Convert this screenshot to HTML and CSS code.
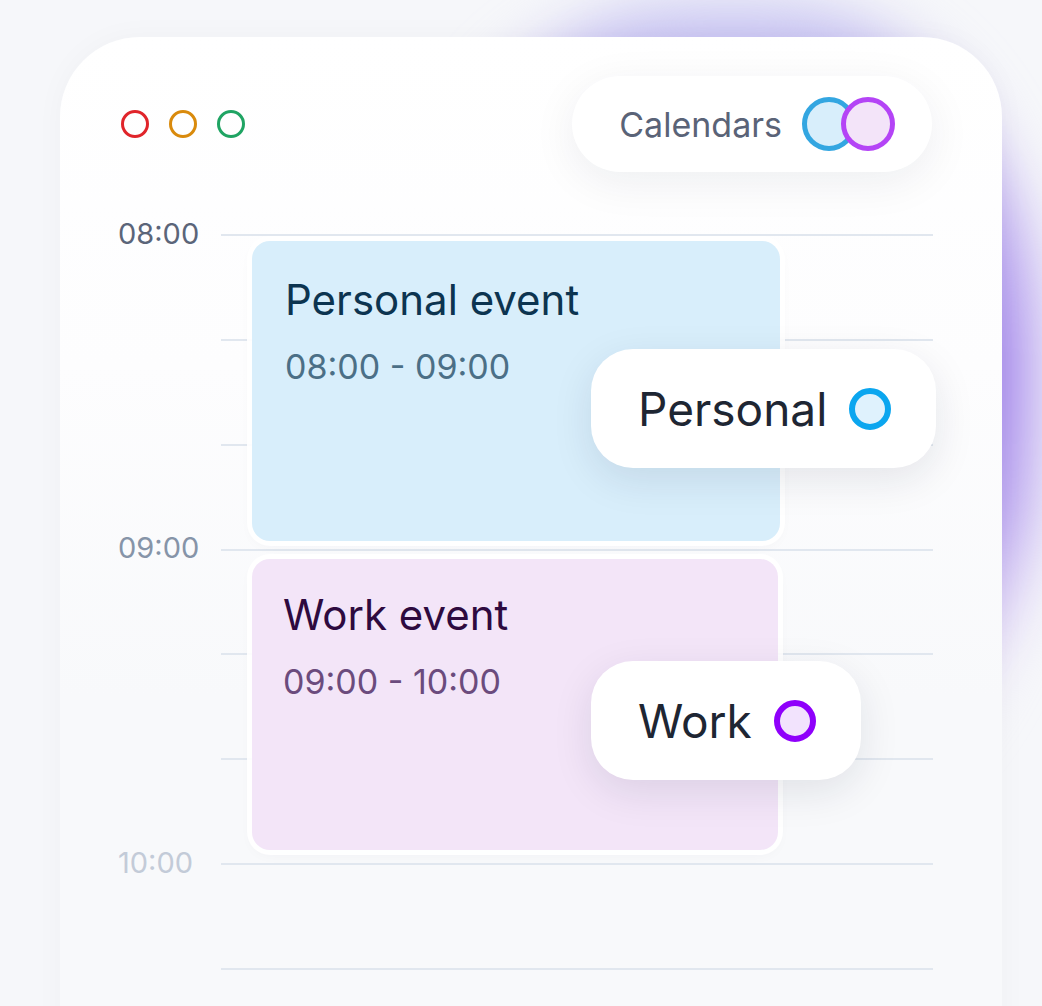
FILE: index.html
```html
<!DOCTYPE html>
<html lang="en">
<head>
<meta charset="utf-8">
<title>Calendars</title>
<link rel="stylesheet" href="styles.css">
</head>
<body>
<div class="glow"></div>
<main class="card">
  <header class="card-head">
    <div class="dots">
      <span class="dot dot-red"></span>
      <span class="dot dot-amber"></span>
      <span class="dot dot-green"></span>
    </div>
    <div class="cal-pill">
      <span class="cal-label">Calendars</span>
      <span class="swatches">
        <i class="swatch swatch-blue"></i>
        <i class="swatch swatch-purple"></i>
      </span>
    </div>
  </header>

  <section class="timeline">
    <div class="tick"><span class="time t1">08:00</span><span class="line"></span></div>
    <div class="tick"><span class="time"></span><span class="line"></span></div>
    <div class="tick"><span class="time"></span><span class="line"></span></div>
    <div class="tick"><span class="time t2">09:00</span><span class="line"></span></div>
    <div class="tick"><span class="time"></span><span class="line"></span></div>
    <div class="tick"><span class="time"></span><span class="line"></span></div>
    <div class="tick"><span class="time t3">10:00</span><span class="line"></span></div>
    <div class="tick"><span class="time"></span><span class="line"></span></div>

    <div class="event event-personal">
      <div class="event-title">Personal event</div>
      <div class="event-time">08:00 - 09:00</div>
    </div>
    <div class="event event-work">
      <div class="event-title">Work event</div>
      <div class="event-time">09:00 - 10:00</div>
    </div>

    <div class="tag tag-personal"><span>Personal</span><i class="ring ring-blue"></i></div>
    <div class="tag tag-work"><span>Work</span><i class="ring ring-purple"></i></div>
  </section>
</main>
</body>
</html>
```

FILE: styles.css
```css
* { box-sizing: border-box; }

html, body {
  margin: 0;
  height: 1006px;
  overflow: hidden;
}

body {
  position: relative;
  background: #f6f7fa;
  font-family: "Inter", "Liberation Sans", sans-serif;
}

.glow {
  position: absolute;
  left: 400px;
  top: 6px;
  width: 632px;
  height: 820px;
  border-radius: 45% 40% 45% 45%;
  background: linear-gradient(180deg, #c8c7f2 0%, #b9a6ef 20%, #a486ec 45%, #b39bee 62%, #d9c9f5 78%, #efe8fa 90%, rgba(246,247,250,0) 100%);
  filter: blur(30px);
  z-index: 0;
}

.card {
  position: relative;
  z-index: 1;
  margin: 37px 0 0 60px;
  width: 942px;
  height: 1100px;
  border-radius: 80px 80px 0 0;
  background: linear-gradient(180deg, #ffffff 0%, #fdfdfe 30%, #f8f9fb 60%, #f8f9fb 100%);
  box-shadow: 0 0 30px rgba(30, 40, 70, 0.03);
  padding: 39px 69px 0 58px;
}

.card-head {
  display: flex;
  align-items: center;
  justify-content: space-between;
  height: 96px;
}

.dots {
  display: flex;
  gap: 20px;
  margin-left: 3px;
}

.dot {
  width: 28px;
  height: 28px;
  border-radius: 50%;
  border: 3px solid;
}
.dot-red { border-color: #e0242a; }
.dot-amber { border-color: #d98a0c; }
.dot-green { border-color: #1fa463; }

.cal-pill {
  display: flex;
  align-items: center;
  gap: 20px;
  height: 96px;
  padding: 0 37px 0 47px;
  margin-right: 1px;
  border-radius: 48px;
  background: #ffffff;
  box-shadow: 0 10px 45px rgba(20, 30, 50, 0.07);
}

.cal-label {
  font-size: 34px;
  color: #5a6377;
}

.swatches {
  display: flex;
}

.swatch {
  display: block;
  width: 54px;
  height: 54px;
  border-radius: 50%;
  border: 5px solid;
}
.swatch-blue { border-color: #33a6e1; background: #d8eefb; }
.swatch-purple { border-color: #b444f6; background: #f3e4f9; margin-left: -15px; }

.timeline {
  position: relative;
  margin-top: 49px;
  display: flex;
  flex-direction: column;
  gap: 76.86px;
}

.tick {
  display: grid;
  grid-template-columns: 103px 1fr;
  align-items: center;
  height: 28px;
}

.time {
  font-size: 29px;
  line-height: 28px;
  margin-top: -3px;
}
.t1 { color: #5b6579; }
.t2 { color: #8694a8; }
.t3 { color: #c3cbd8; }

.line {
  height: 2px;
  background: #e1e7ef;
}

.event {
  position: absolute;
  left: 134px;
  border-radius: 18px;
  padding-left: 33px;
  box-shadow: 0 0 0 5px rgba(255, 255, 255, 0.92), 0 4px 14px rgba(30, 40, 70, 0.04);
  z-index: 2;
}

.event-personal {
  top: 20px;
  width: 528px;
  height: 300px;
  padding-top: 34px;
  background: #d8eefb;
}

.event-work {
  top: 338px;
  width: 526px;
  height: 291px;
  padding-top: 31px;
  padding-left: 31px;
  background: #f3e5f8;
}

.event-title {
  font-size: 42px;
  line-height: 1.2;
}
.event-time {
  margin-top: 22px;
  font-size: 34px;
  line-height: 1.2;
}

.event-personal .event-title { color: #0c3450; }
.event-personal .event-time { color: #4b6f86; }
.event-work .event-title { color: #2e0a3f; }
.event-work .event-time { color: #6b4b7d; }

.tag {
  position: absolute;
  z-index: 3;
  display: flex;
  align-items: center;
  gap: 22px;
  height: 119px;
  padding: 0 45px 0 47px;
  border-radius: 42px;
  background: #ffffff;
  box-shadow: 0 12px 40px rgba(20, 30, 60, 0.1);
  font-size: 46px;
  color: #1e2633;
}

.tag-personal { left: 473px; top: 128px; }
.tag-work { left: 473px; top: 440px; }

.ring {
  display: block;
  width: 42px;
  height: 42px;
  border-radius: 50%;
  border: 6px solid;
}
.ring-blue { border-color: #0ba6ef; background: #dff2fd; }
.ring-purple { border-color: #8f00fb; background: #f2e3fd; }
```
